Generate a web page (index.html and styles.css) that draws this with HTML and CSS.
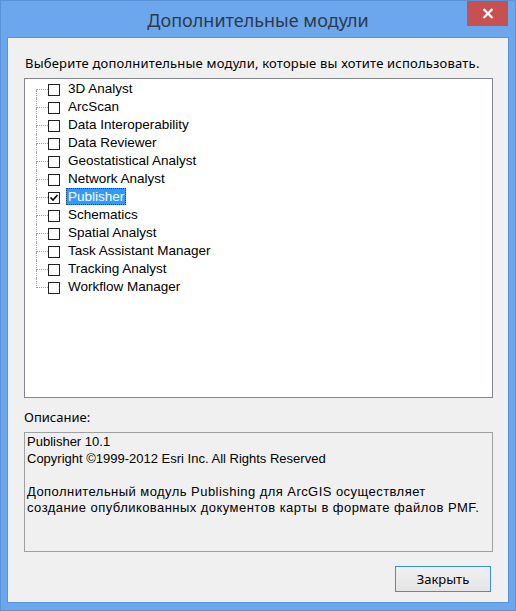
FILE: index.html
```html
<!DOCTYPE html>
<html lang="ru">
<head>
	<meta charset="UTF-8">
	<title>Дополнительные модули</title>
	<link rel="stylesheet" href="styles.css">
</head>
<body>
	<div class="window">
		<div class="titlebar">
			<div class="title">Дополнительные модули</div>
			<div class="close">
				<svg width="12" height="11" viewBox="0 0 12 11"><path d="M1.5 1 L10.5 10 M10.5 1 L1.5 10" stroke="#fff" stroke-width="2.2" fill="none"/></svg>
			</div>
		</div>
		<div class="client">
			<div class="prompt">Выберите дополнительные модули, которые вы хотите использовать.</div>
			<div class="tree">
				<div class="row first"><span class="branch"><span class="b-top"></span><span class="b-bot"></span></span><span class="check"></span><span class="name">3D Analyst</span></div>
				<div class="row"><span class="branch"><span class="b-top"></span><span class="b-bot"></span></span><span class="check"></span><span class="name">ArcScan</span></div>
				<div class="row"><span class="branch"><span class="b-top"></span><span class="b-bot"></span></span><span class="check"></span><span class="name">Data Interoperability</span></div>
				<div class="row"><span class="branch"><span class="b-top"></span><span class="b-bot"></span></span><span class="check"></span><span class="name">Data Reviewer</span></div>
				<div class="row"><span class="branch"><span class="b-top"></span><span class="b-bot"></span></span><span class="check"></span><span class="name">Geostatistical Analyst</span></div>
				<div class="row"><span class="branch"><span class="b-top"></span><span class="b-bot"></span></span><span class="check"></span><span class="name">Network Analyst</span></div>
				<div class="row"><span class="branch"><span class="b-top"></span><span class="b-bot"></span></span><span class="check"><svg width="10" height="10" viewBox="0 0 10 10"><path d="M1.5 4.5 L4 7 L8.5 2" stroke="#000" stroke-width="1.6" fill="none"/></svg></span><span class="name selected">Publisher</span></div>
				<div class="row"><span class="branch"><span class="b-top"></span><span class="b-bot"></span></span><span class="check"></span><span class="name">Schematics</span></div>
				<div class="row"><span class="branch"><span class="b-top"></span><span class="b-bot"></span></span><span class="check"></span><span class="name">Spatial Analyst</span></div>
				<div class="row"><span class="branch"><span class="b-top"></span><span class="b-bot"></span></span><span class="check"></span><span class="name">Task Assistant Manager</span></div>
				<div class="row"><span class="branch"><span class="b-top"></span><span class="b-bot"></span></span><span class="check"></span><span class="name">Tracking Analyst</span></div>
				<div class="row last"><span class="branch"><span class="b-top"></span><span class="b-bot"></span></span><span class="check"></span><span class="name">Workflow Manager</span></div>
			</div>
			<div class="caption">Описание:</div>
			<div class="desc">
				<p>Publisher 10.1<br>Copyright ©1999-2012 Esri Inc. All Rights Reserved</p>
				<p class="ru">Дополнительный модуль Publishing для ArcGIS осуществляет<br>создание опубликованных документов карты в формате файлов PMF.</p>
			</div>
			<div class="actions"><button class="btn">Закрыть</button></div>
		</div>
	</div>
</body>
</html>
```

FILE: styles.css
```css
body{margin:0;background:#6ca7ee;}
.window{width:516px;height:611px;background:#6ca7ee;box-shadow:inset 0 0 0 1px #5a92d8;box-sizing:border-box;display:flex;flex-direction:column;}

.titlebar{height:38px;display:grid;grid-template-columns:1fr auto 1fr;}
.title{grid-column:2;align-self:center;margin-top:1px;font:18px "Noto Sans","Open Sans",sans-serif;color:#2d3a48;white-space:nowrap;}
.close{grid-column:3;justify-self:end;align-self:start;margin:1px 8px 0 0;width:41px;height:25px;background:#c75050;display:flex;align-items:center;justify-content:center;}

.client{flex:1;margin:0 8px 9px;background:#f0f0f0;box-shadow:0 0 0 1px #5a92d8;padding:17px 15px 0 16px;display:flex;flex-direction:column;font:13px "Noto Sans","Open Sans",sans-serif;color:#000;}
.prompt{line-height:16px;margin-left:1px;white-space:nowrap;letter-spacing:0.2px;}

.tree{margin-top:7px;height:320px;box-sizing:border-box;border:1px solid #828790;background:#fff;padding:1px 0 0 11px;font:13.5px "Liberation Sans",Arial,sans-serif;}
.row{display:flex;height:18px;}
.branch{display:flex;flex-direction:column;width:12px;}
.b-top{height:10px;box-sizing:border-box;border-left:1px dotted #a0a0a0;border-bottom:1px dotted #a0a0a0;}
.b-bot{height:8px;box-sizing:border-box;border-left:1px dotted #a0a0a0;}
.first .b-top{border-left-color:transparent;}
.last .b-bot{border-left:none;}
.check{width:12px;height:12px;box-sizing:border-box;border:1px solid #222;background:#fff;margin-top:4px;display:flex;align-items:center;justify-content:center;}
.name{margin-left:6px;padding:0 2px;line-height:17px;height:17px;white-space:nowrap;}
.name.selected{background:#3399ff;color:#fff;outline:1px dotted #1a3f70;outline-offset:-1px;}

.caption{margin-top:11px;line-height:16px;}
.desc{margin-top:7px;height:120px;box-sizing:border-box;border:1px solid #a0a0a0;padding:1px 2px;font:13px/16.5px "Liberation Sans",Arial,sans-serif;}
.desc p{margin:0 0 16.5px;}
.desc p.ru{letter-spacing:0.45px;}

.actions{display:flex;justify-content:flex-end;margin-top:14px;padding-right:2px;}
.btn{width:96px;height:26px;border:1px solid #3c8ee0;background:linear-gradient(#f0f0f0,#e5e5e5);font:13px "Noto Sans","Open Sans",sans-serif;color:#000;padding:0;}
```
